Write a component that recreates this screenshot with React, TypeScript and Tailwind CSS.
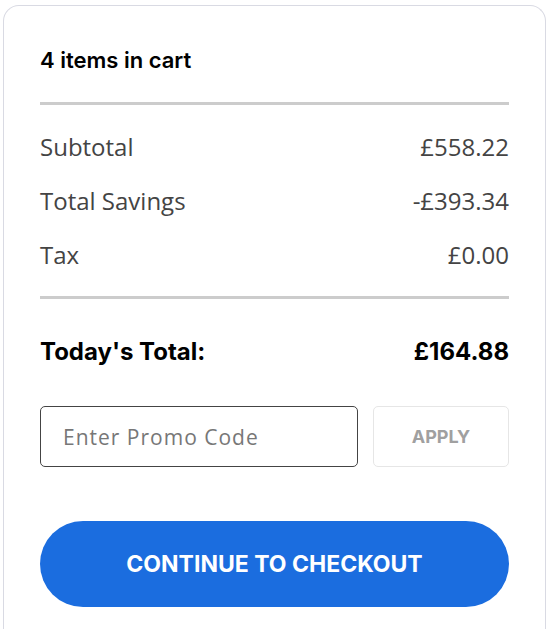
import { useState } from 'react'

const rows = [
  { label: 'Subtotal', value: '£558.22' },
  { label: 'Total Savings', value: '-£393.34' },
  { label: 'Tax', value: '£0.00' },
]

const heading = { fontFamily: 'Inter, sans-serif' }

export default function App() {
  const [promo, setPromo] = useState('')

  return (
    <div className="min-h-screen bg-white pl-[3px] pr-[6px] pt-[5px]">
      <div
        className="rounded-t-[16px] border border-b-0 border-[#d9dae3] bg-white px-[36px] pt-[40px] pb-[30px]"
        style={{ fontFamily: '"Open Sans", sans-serif' }}
      >
        {/* header */}
        <h2 className="text-[22px] leading-[28px] font-semibold text-black" style={heading}>
          4 items in cart
        </h2>
        <div className="mt-[28px] h-[3px] bg-[#cccccc]" />

        {/* summary lines */}
        <div className="mt-[27px] flex flex-col gap-[24px]">
          {rows.map((r) => (
            <div key={r.label} className="flex justify-between text-[24px] leading-[30px] text-[#444444]">
              <span>{r.label}</span>
              <span>{r.value}</span>
            </div>
          ))}
        </div>
        <div className="mt-[26px] h-[3px] bg-[#cccccc]" />

        <div className="mt-[38px] flex justify-between text-[24px] leading-[30px] font-bold text-black" style={heading}>
          <span>Today's Total:</span>
          <span>£164.88</span>
        </div>

        {/* promo code */}
        <div className="mt-[39px] flex gap-[15px]">
          <input
            value={promo}
            onChange={(e) => setPromo(e.target.value)}
            placeholder="Enter Promo Code"
            className="h-[61px] w-[318px] rounded-[5px] border border-[#444444] px-[22px] text-[21px] text-[#333] tracking-[1px] outline-none placeholder:text-[#777777]"
          />
          <button className="h-[61px] flex-1 rounded-[5px] border border-[#e6e6e6] text-[18px] font-bold text-[#a0a0a0]" style={heading}>
            APPLY
          </button>
        </div>

        <button
          className="mt-[54px] h-[86px] w-full rounded-full bg-[#1b6ddf] text-[23px] font-bold text-white"
          style={heading}
        >
          CONTINUE TO CHECKOUT
        </button>
      </div>
    </div>
  )
}
